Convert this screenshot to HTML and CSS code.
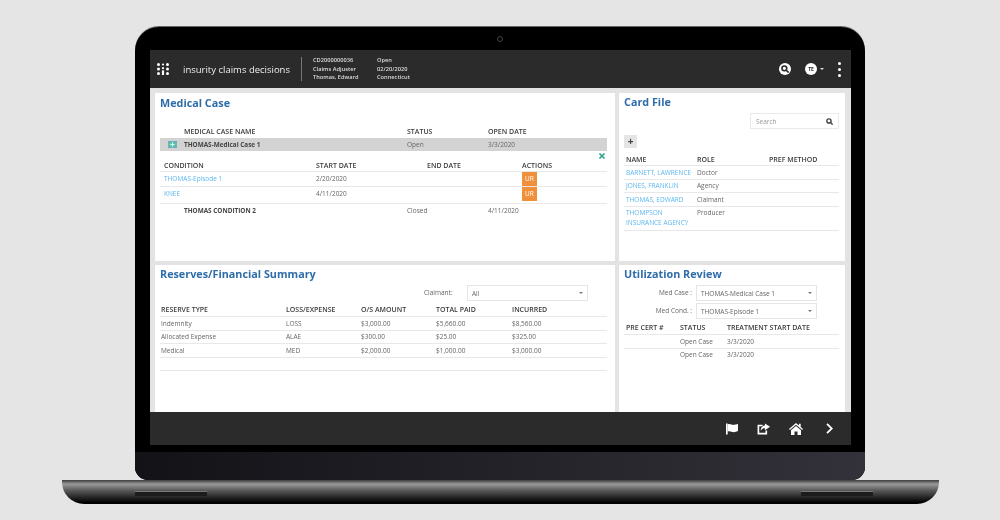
FILE: index.html
```html
<!DOCTYPE html>
<html>
<head>
  <title>Insurity Claims Decisions</title>
  <link rel="stylesheet" href="styles.css">
</head>
<body>

<div class="lid">
  <div class="camera"></div>
  <div class="screen">

    <!-- Top bar -->
    <header class="topbar">
      <svg class="logo" width="12" height="12" viewBox="0 0 12 12" fill="#fff">
        <circle cx="1.5" cy="1.5" r="1.5"/><circle cx="6" cy="1.5" r="1.1"/><circle cx="10.5" cy="1.5" r="1.5"/>
        <circle cx="1.5" cy="6" r="1.5"/><circle cx="6" cy="5.2" r="1.1"/><circle cx="10.5" cy="6" r="1.5"/>
        <circle cx="1.5" cy="10.5" r="1.5"/><rect x="4.9" y="7.4" width="2.2" height="4.600"/><circle cx="10.5" cy="10.5" r="1.5"/>
      </svg>
      <div class="product">insurity claims decisions</div>
      <div class="claim-info">
        <div>CD2000000036</div>
        <div>Claims Adjuster</div>
        <div>Thomas, Edward</div>
      </div>
      <div class="claim-status">
        <div>Open</div>
        <div>02/20/2020</div>
        <div>Connecticut</div>
      </div>
      <div class="topbar-tools">
        <div class="round-btn">
          <svg width="8" height="8" viewBox="0 0 10 10" fill="none" stroke="#2b2b2b" stroke-width="2"><circle cx="4.2" cy="4.2" r="3"/><path d="M6.5 6.5L9.5 9.5"/></svg>
        </div>
        <div class="user">
          <div class="round-btn">TE</div>
          <span class="caret"></span>
        </div>
        <div class="kebab"><i></i><i></i><i></i></div>
      </div>
    </header>

    <!-- Panels -->
    <main class="panels">

      <section class="panel panel-wide">
        <h2 class="title">Medical Case</h2>
        <div class="row case-cols head case-head">
          <span></span><span>MEDICAL CASE NAME</span><span>STATUS</span><span>OPEN DATE</span>
        </div>
        <div class="row case-cols case-selected">
          <svg width="9" height="7" viewBox="0 0 9 7"><rect width="9" height="7" fill="#6fa8c9"/><path d="M3 0h3v2h3v3H6v2H3V5H0V2h3z" fill="#5fc4a4"/><path d="M4 1.5h1v1.500h1.500v1H5v1.500H4V4H2.500V3H4z" fill="#dff"/></svg>
          <b>THOMAS-Medical Case 1</b><span>Open</span><span>3/3/2020</span>
        </div>
        <div class="expand">
          <svg width="6" height="6" viewBox="0 0 6 6" stroke="#3aa893" stroke-width="1.600"><path d="M.5 .5l5 5M5.500 .5l-5 5"/></svg>
        </div>
        <div class="row cond-cols head line">
          <span>CONDITION</span><span>START DATE</span><span>END DATE</span><span>ACTIONS</span>
        </div>
        <div class="row cond-cols cond-row line">
          <a>THOMAS-Episode 1</a><span>2/20/2020</span><span></span><span class="ur">UR</span>
        </div>
        <div class="row cond-cols cond-row cond-last line">
          <a>KNEE</a><span>4/11/2020</span><span></span><span class="ur">UR</span>
        </div>
        <div class="row case-cols case-closed">
          <span></span><b>THOMAS CONDITION 2</b><span>Closed</span><span>4/11/2020</span>
        </div>
      </section>

      <section class="panel">
        <h2 class="title title-up">Card File</h2>
        <div class="search-row">
          <div class="search">
            <span>Search</span>
            <svg width="7" height="7" viewBox="0 0 10 10" fill="none" stroke="#444" stroke-width="2"><circle cx="4.200" cy="4.200" r="3"/><path d="M6.500 6.500L9.500 9.500"/></svg>
          </div>
        </div>
        <div class="plus">+</div>
        <div class="row card-cols head line">
          <span>NAME</span><span>ROLE</span><span>PREF METHOD</span>
        </div>
        <div class="row card-cols card-row line"><a>BARNETT, LAWRENCE</a><span>Doctor</span></div>
        <div class="row card-cols card-row line"><a>JONES, FRANKLIN</a><span>Agency</span></div>
        <div class="row card-cols card-row line"><a>THOMAS, EDWARD</a><span>Claimant</span></div>
        <div class="row card-cols card-tall line"><a>THOMPSON<br>INSURANCE AGENCY</a><span>Producer</span></div>
      </section>

      <section class="panel panel-wide">
        <h2 class="title title-up">Reserves/Financial Summary</h2>
        <div class="claimant">
          <label>Claimant:</label>
          <div class="select claimant-select"><span>All</span><span class="arrow"></span></div>
        </div>
        <div class="row res-cols head line">
          <span>RESERVE TYPE</span><span>LOSS/EXPENSE</span><span>O/S AMOUNT</span><span>TOTAL PAID</span><span>INCURRED</span>
        </div>
        <div class="row res-cols res-row line"><span>Indemnity</span><span>LOSS</span><span>$3,000.00</span><span>$5,660.00</span><span>$8,560.00</span></div>
        <div class="row res-cols res-row line"><span>Allocated Expense</span><span>ALAE</span><span>$300.00</span><span>$25.00</span><span>$325.00</span></div>
        <div class="row res-cols res-row line"><span>Medical</span><span>MED</span><span>$2,000.00</span><span>$1,000.00</span><span>$3,000.00</span></div>
        <div class="res-empty line"></div>
      </section>

      <section class="panel">
        <h2 class="title title-up">Utilization Review</h2>
        <div class="field">
          <label>Med Case :</label>
          <div class="select ur-select"><span>THOMAS-Medical Case 1</span><span class="arrow"></span></div>
        </div>
        <div class="field">
          <label>Med Cond. :</label>
          <div class="select ur-select"><span>THOMAS-Episode 1</span><span class="arrow"></span></div>
        </div>
        <div class="row util-cols head line util-head">
          <span>PRE CERT #</span><span>STATUS</span><span>TREATMENT START DATE</span>
        </div>
        <div class="row util-cols card-row line"><span></span><span>Open Case</span><span>3/3/2020</span></div>
        <div class="row util-cols card-row"><span></span><span>Open Case</span><span>3/3/2020</span></div>
      </section>

    </main>

    <!-- Bottom bar -->
    <footer class="bottombar">
      <svg width="12" height="12" viewBox="0 0 13 12" fill="#fff"><path d="M0 0h1.800v12H0z"/><path d="M1.800 1c3-1.200 4.500 1 6.700 .5 1.500-.2 3-.7 4.500-1v7.800c-1.500.7-3 1.200-4.500 1.200-2.500 0-4-1.700-6.700-.7z"/></svg>
      <svg width="13" height="12" viewBox="0 0 14 12"><path d="M6 2.200H1.500V11h8.500V7.500" fill="none" stroke="#fff" stroke-width="1.800"/><path d="M8.500 0L14 3.700 8.500 7.400V5.200C6.500 5.200 5 6 4 8c0-3.500 1.800-5.500 4.500-5.700z" fill="#fff"/></svg>
      <svg width="14" height="12" viewBox="0 0 14 12" fill="#fff"><path d="M7 0L0 6l.8 1L7 1.800 13.200 7l.8-1-2.300-2V.8H10v1.800z"/><path d="M7 3L2 7.200V12h3.500V8.500h3V12H12V7.200z"/></svg>
      <svg class="next" width="7" height="11" viewBox="0 0 7 11" fill="none" stroke="#fff" stroke-width="1.800"><path d="M1 .8L5.800 5.500 1 10.200"/></svg>
    </footer>
  </div>
  <div class="chin"></div>
</div>

<div class="base">
  <span class="notch"></span>
  <span class="notch"></span>
</div>

</body>
</html>
```

FILE: styles.css
```css
body {
  margin: 0;
  height: 520px;
  overflow: hidden;
  background-color: #E5E5E5;
  font-family: "Open Sans", Arial, sans-serif;
  font-size: 6.5px;
  color: #666;
  display: flex;
  flex-direction: column;
  align-items: center;
}

/* Laptop */
.lid {
  position: relative;
  margin-top: 27px;
  width: 730px;
  height: 453px;
  box-sizing: border-box;
  background-color: #000;
  border-radius: 24px 24px 13px 13px;
  box-shadow: 0 -1px 0 #666;
  overflow: hidden;
  display: flex;
  flex-direction: column;
}
.camera {
  position: absolute;
  left: 362px;
  top: 9px;
  width: 6px;
  height: 6px;
  box-sizing: border-box;
  border: 1px solid #444;
  border-radius: 50%;
}
.screen {
  margin: 23px 14px 7px 15px;
  height: 395px;
  display: flex;
  flex-direction: column;
  background-color: #E3E3E3;
  filter: blur(0.3px);
}
.chin {
  flex: 1;
  background: linear-gradient(to right, #131217, #33323A);
}
.base {
  width: 877px;
  height: 24px;
  box-sizing: border-box;
  padding: 11px 66px 0 73px;
  border-radius: 0 0 22px 22px;
  background: linear-gradient(to bottom, #3c3c3c 0, #9a9a9a 17%, #5c5c5c 42%, #262626 72%, #000 94%);
  display: flex;
  justify-content: space-between;
  align-items: flex-start;
}
.notch {
  width: 72px;
  height: 5px;
  box-sizing: border-box;
  border-top: 1px solid #777;
  background-color: #1c1c1c;
}

/* Top bar */
.topbar {
  height: 38px;
  flex: none;
  background-color: #2B2B2B;
  color: #fff;
  display: flex;
  align-items: center;
  padding: 0 9px 0 7px;
}
.product {
  margin-left: 14px;
  width: 118px;
  font-size: 9.5px;
  white-space: nowrap;
  color: #eee;
}
.claim-info, .claim-status {
  height: 24px;
  box-sizing: border-box;
  display: flex;
  flex-direction: column;
  justify-content: center;
  font-size: 5.7px;
  line-height: 8.5px;
  font-weight: 600;
  white-space: nowrap;
  color: #ddd;
}
.claim-info {
  border-left: 1px solid #777;
  padding-left: 11px;
  width: 76px;
}
.topbar-tools {
  margin-left: auto;
  display: flex;
  align-items: center;
}
.round-btn {
  width: 12px;
  height: 12px;
  border-radius: 50%;
  background-color: #fff;
  color: #2B2B2B;
  font-size: 5px;
  font-weight: 700;
  display: flex;
  align-items: center;
  justify-content: center;
}
.user {
  margin-left: 14px;
  display: flex;
  align-items: center;
}
.caret {
  margin-left: 3px;
  border-left: 2px solid transparent;
  border-right: 2px solid transparent;
  border-top: 2px solid #ddd;
}
.kebab {
  margin-left: 14px;
  width: 4px;
  display: flex;
  flex-direction: column;
  gap: 3px;
}
.kebab i {
  height: 3px;
  width: 3px;
  background-color: #fff;
  border-radius: 50%;
}

/* Panels */
.panels {
  flex: 1;
  display: grid;
  grid-template-columns: 460px 226px;
  grid-template-rows: 168px 147px;
  gap: 4px;
  padding: 5px 6px 0 5px;
}
.panel {
  background-color: #fff;
  padding: 3px 6px 0 5px;
  min-width: 0;
}
.panel-wide {
  padding-right: 8px;
}
.title {
  margin: 0;
  height: 13px;
  line-height: 13px;
  font-size: 10.8px;
  font-weight: 700;
  color: #2E6DA9;
}
.title-up {
  margin-top: -1px;
}
.row {
  display: grid;
  align-items: center;
}
.head {
  font-size: 7px;
  font-weight: 600;
  color: #3C3C3C;
  white-space: nowrap;
}
.line {
  border-bottom: 1px solid #E8E8E8;
}
b {
  font-size: 6.4px;
  font-weight: 700;
  color: #444;
}
a {
  color: #5DB7EE;
}

/* Medical case */
.case-cols {
  grid-template-columns: 24px 223px 81px 1fr;
}
.case-head {
  margin-top: 16px;
  height: 13px;
}
.case-selected {
  height: 13px;
  background-color: #D3D3D3;
}
.case-selected svg {
  margin-left: 8px;
}
.expand {
  height: 7px;
  padding-top: 1px;
  display: flex;
  justify-content: flex-end;
  align-items: center;
  padding-right: 2px;
}
.cond-cols {
  grid-template-columns: 152px 111px 95px 1fr;
  padding-left: 4px;
}
.cond-cols.head {
  height: 12px;
}
.cond-row {
  height: 14px;
  line-height: 13px;
  align-items: start;
}
.cond-last {
  height: 16px;
}
.ur {
  width: 15px;
  height: 14px;
  line-height: 14px;
  text-align: center;
  background-color: #F0903A;
  color: #fff;
}
.case-closed {
  height: 13px;
}

/* Card file */
.search-row {
  margin-top: 5px;
  display: flex;
  justify-content: flex-end;
}
.search {
  width: 89px;
  height: 16px;
  box-sizing: border-box;
  border: 1px solid #EAEAEA;
  padding: 0 5px;
  display: flex;
  justify-content: space-between;
  align-items: center;
  color: #999;
}
.plus {
  margin-top: 6px;
  width: 13px;
  height: 13px;
  line-height: 12px;
  background-color: #E5E5E5;
  text-align: center;
  font-size: 10px;
  font-weight: 700;
  color: #444;
}
.card-cols {
  grid-template-columns: 71px 72px 1fr;
  padding-left: 2px;
}
.card-cols.head {
  height: 12px;
  margin-top: 5px;
}
.card-row {
  height: 12.5px;
}
.card-tall {
  height: 22px;
  line-height: 10px;
  align-items: start;
  padding-top: 1px;
}

/* Reserves */
.claimant {
  margin-top: 5px;
  height: 16px;
  display: flex;
  align-items: center;
  padding-left: 264px;
}
.claimant label {
  width: 43px;
  padding-bottom: 2px;
}
.select {
  height: 16px;
  box-sizing: border-box;
  border: 1px solid #E5E5E5;
  padding: 0 4px;
  display: flex;
  justify-content: space-between;
  align-items: center;
}
.claimant-select {
  width: 121px;
}
.arrow {
  border-left: 2px solid transparent;
  border-right: 2px solid transparent;
  border-top: 2px solid #777;
}
.res-cols {
  grid-template-columns: 125px 75px 75px 76px 1fr;
  padding-left: 1px;
}
.res-cols.head {
  height: 13px;
  margin-top: 2px;
}
.res-row {
  height: 12.5px;
}
.res-empty {
  height: 12px;
}

/* Utilization review */
.field {
  margin-top: 2px;
  height: 16px;
  display: flex;
  align-items: center;
}
.field label {
  width: 68px;
  text-align: right;
  margin-right: 4px;
  padding-bottom: 2px;
}
.field:first-of-type {
  margin-top: 5px;
}
.ur-select {
  width: 121px;
}
.util-cols {
  grid-template-columns: 54px 47px 1fr;
  padding-left: 2px;
}
.util-head {
  height: 13px;
  margin-top: 2px;
}

/* Bottom bar */
.bottombar {
  height: 33px;
  flex: none;
  background-color: #2B2B2B;
  display: flex;
  justify-content: flex-end;
  align-items: center;
  gap: 19px;
  padding-right: 18px;
}
.next {
  margin-left: 4px;
}
```
